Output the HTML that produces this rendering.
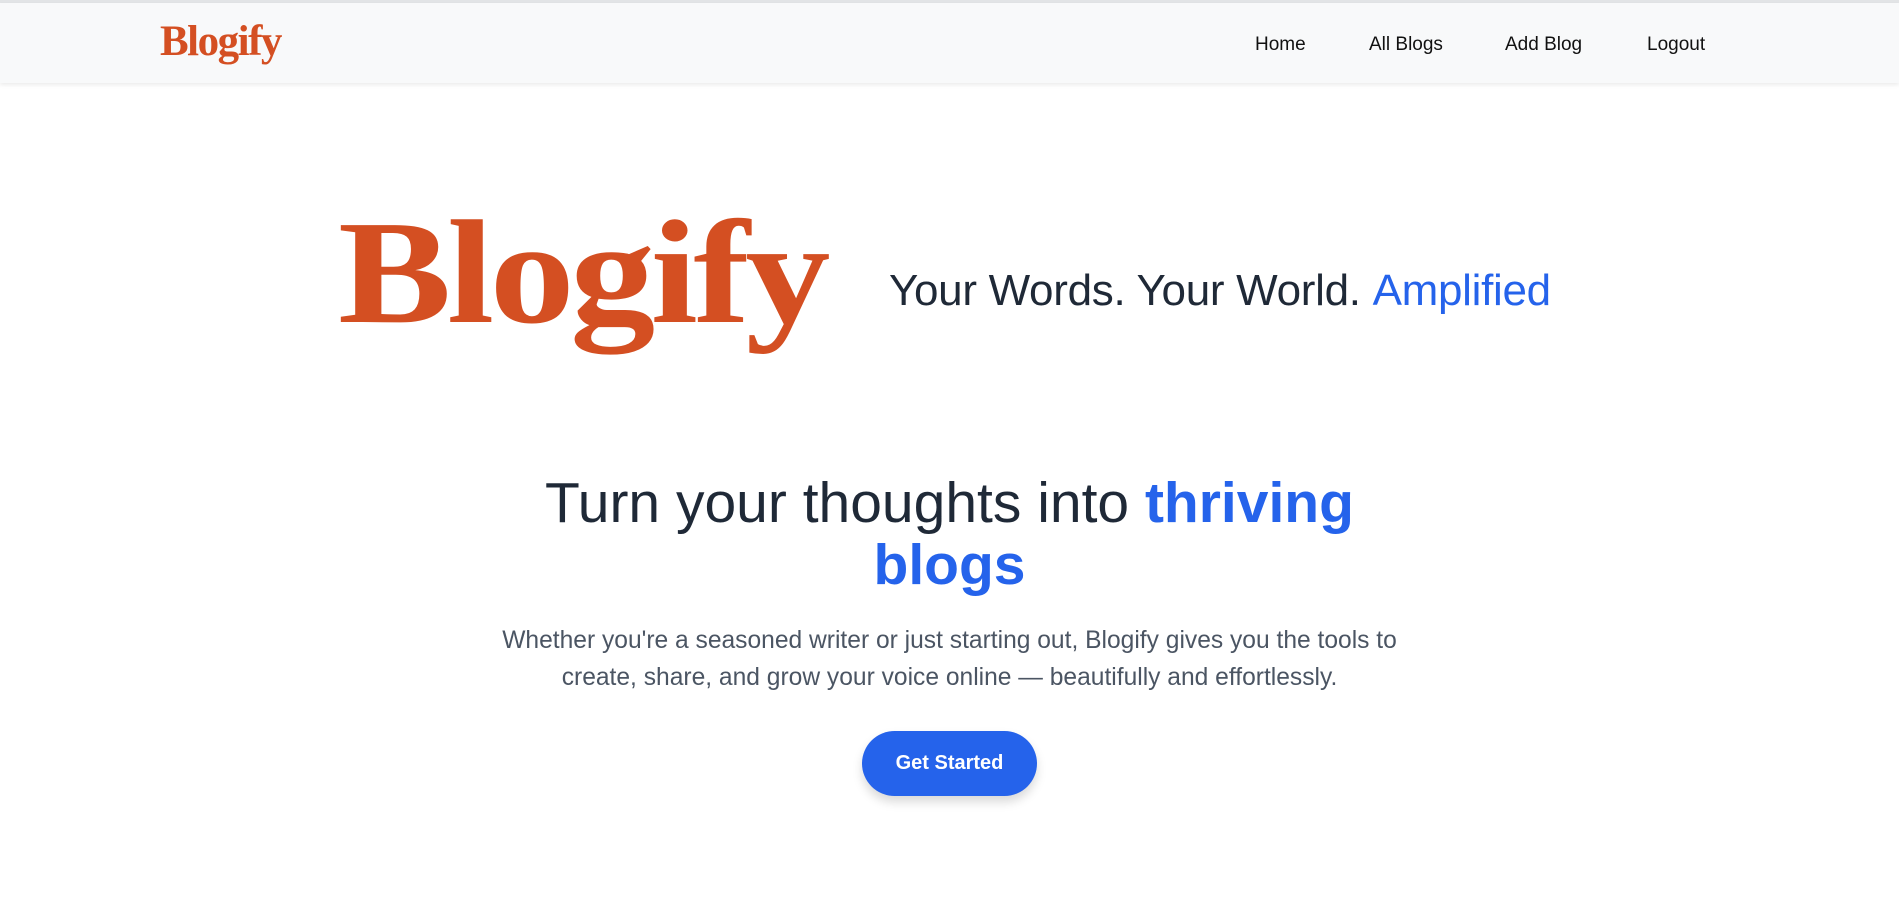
<!DOCTYPE html>
<html><head><meta charset="utf-8"><style>
*{margin:0;padding:0;box-sizing:border-box}
body{width:1899px;height:907px;background:#fff;font-family:"Liberation Sans",sans-serif;overflow:hidden;position:relative}
.top{position:absolute;top:0;left:0;width:1899px;height:3px;background:#e2e4e6}
nav{position:absolute;top:3px;left:0;width:1899px;height:80px;background:#f8f9fa;box-shadow:0 2px 4px rgba(0,0,0,.08)}
.logo{position:absolute;left:160px;top:14px;font-family:"Liberation Serif",serif;font-weight:bold;font-size:43px;color:#d44f22;letter-spacing:-1.5px}
.links a{position:absolute;top:31px;font-size:19px;color:#111;text-decoration:none}
.big{position:absolute;left:338px;top:199px;font-family:"Liberation Serif",serif;font-weight:bold;font-size:148px;line-height:1;color:#d44f22;letter-spacing:-4px;transform:scaleX(1.15);transform-origin:left}
.tag{position:absolute;left:889px;top:266px;font-size:44px;color:#1f2937;white-space:nowrap;font-weight:300;letter-spacing:-0.3px}
.tag b{color:#2563eb}
h1{position:absolute;left:0;width:1899px;top:472px;text-align:center;font-size:57px;font-weight:normal;line-height:62px;color:#1f2937}
h1 b{color:#2563eb}
p{position:absolute;left:0;width:1899px;top:622px;text-align:center;font-size:24.6px;line-height:37px;color:#4b5563}
.btn{position:absolute;left:862px;top:731px;width:175px;height:65px;border-radius:33px;background:#2563eb;color:#fff;font-weight:bold;font-size:20px;text-align:center;line-height:65px;box-shadow:0 6px 10px rgba(0,0,0,.15)}
</style></head><body>
<div class="top"></div>
<nav>
<div class="logo">Blogify</div>
<div class="links">
<a style="left:1255px">Home</a>
<a style="left:1369px">All Blogs</a>
<a style="left:1505px">Add Blog</a>
<a style="left:1647px">Logout</a>
</div>
</nav>
<div class="big">Blogify</div>
<div class="tag">Your Words. Your World. <b>Amplified</b></div>
<h1>Turn your thoughts into <b>thriving<br>blogs</b></h1>
<p>Whether you're a seasoned writer or just starting out, Blogify gives you the tools to<br>create, share, and grow your voice online — beautifully and effortlessly.</p>
<div class="btn">Get Started</div>
</body></html>
